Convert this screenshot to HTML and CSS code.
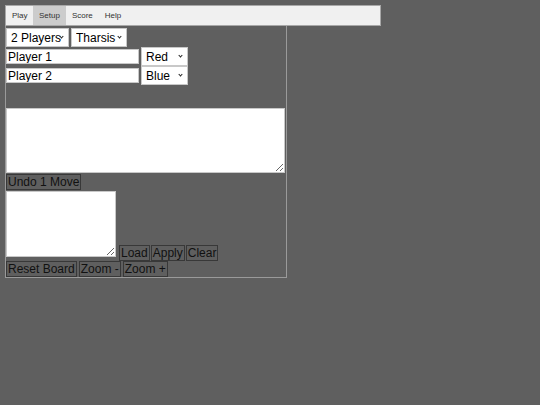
FILE: index.html
```html
<!DOCTYPE html>
<html>
<head>
<meta charset="utf-8">
<link rel="stylesheet" href="styles.css">
</head>
<body>
<div class="nav">
  <div class="tab">Play</div>
  <div class="tab active">Setup</div>
  <div class="tab">Score</div>
  <div class="tab">Help</div>
</div>
<div class="panel">
  <div class="row first">
    <span class="selwrap"><select class="sel sel-players"><option>2 Players</option></select></span>
    <span class="selwrap"><select class="sel sel-map"><option>Tharsis</option></select></span>
  </div>
  <div class="row">
    <input class="name" type="text" value="Player 1">
    <span class="selwrap"><select class="sel sel-color"><option>Red</option></select></span>
  </div>
  <div class="row">
    <input class="name" type="text" value="Player 2">
    <span class="selwrap"><select class="sel sel-color"><option>Blue</option></select></span>
  </div>
  <textarea class="log"></textarea>
  <div class="row-btn"><button class="btn">Undo 1 Move</button></div>
  <div class="row-load">
    <textarea class="state"></textarea>
    <div class="btn-group tight">
      <button class="btn">Load</button>
      <button class="btn">Apply</button>
      <button class="btn">Clear</button>
    </div>
  </div>
  <div class="btn-group wide">
    <button class="btn">Reset Board</button>
    <button class="btn">Zoom -</button>
    <button class="btn">Zoom +</button>
  </div>
</div>
</body>
</html>
```

FILE: styles.css
```css
html, body {
  background: #5f5f5f;
}
body {
  margin: 5px;
  font-family: "Liberation Sans", Arial, sans-serif;
}
.nav {
  width: 376px;
  height: 21px;
  box-sizing: border-box;
  background: #f0f0f0;
  border: 1px solid #a8a8a8;
  display: flex;
}
.tab {
  font-size: 8px;
  line-height: 19px;
  color: #333;
  padding: 0 6px;
}
.tab:first-child {
  padding-left: 6px;
  width: 15px;
}
.active {
  background: #cccccc;
}
.panel {
  width: 282px;
  height: 252px;
  box-sizing: border-box;
  border: 1px solid #9a9a9a;
  border-top: none;
  padding-top: 2px;
}
.row {
  display: flex;
  align-items: center;
  gap: 2px;
  height: 19px;
}
.selwrap {
  position: relative;
  display: block;
  height: 19px;
}
.selwrap::after {
  content: "";
  position: absolute;
  right: 6px;
  top: 7px;
  width: 2px;
  height: 2px;
  border-right: 1px solid #222;
  border-bottom: 1px solid #222;
  transform: rotate(45deg);
  pointer-events: none;
}
.sel {
  display: block;
  -webkit-appearance: none;
  appearance: none;
  height: 19px;
  box-sizing: border-box;
  font-family: "Liberation Sans", Arial, sans-serif;
  font-size: 12px;
  color: #000;
  background: #fff;
  border: 1px solid #c8c8c8;
  border-radius: 0;
  padding: 0 0 0 4px;
  margin: 0;
  outline: none;
}
.sel-players { width: 63px; }
.sel-map { width: 56px; }
.sel-color { width: 47px; }
.name {
  width: 133px;
  height: 15px;
  box-sizing: border-box;
  font-family: "Liberation Sans", Arial, sans-serif;
  font-size: 12px;
  border: 1px solid #c8c8c8;
  background: #fff;
  padding: 0 1px;
  margin: 0;
  color: #000;
}
.log {
  display: block;
  width: 279px;
  height: 65px;
  box-sizing: border-box;
  margin: 23px 0 0 0;
  border: 1px solid #c8c8c8;
  background: #fff;
  padding: 0;
}
.row-btn {
  margin-top: 1px;
  display: flex;
}
.btn {
  font-family: "Liberation Sans", Arial, sans-serif;
  font-size: 12px;
  line-height: 14px;
  height: 16px;
  box-sizing: border-box;
  padding: 0 1px;
  margin: 0;
  background: #5f5f5f;
  color: #111;
  border: 1px solid #383838;
  border-radius: 0;
}
.row-load {
  display: flex;
  align-items: flex-end;
  gap: 3px;
  margin-top: 1px;
}
.state {
  display: block;
  width: 110px;
  height: 66px;
  box-sizing: border-box;
  margin: 0 0 4px 0;
  border: 1px solid #c8c8c8;
  background: #fff;
  padding: 0;
}
.btn-group {
  display: flex;
}
.tight { gap: 1px; }
.wide { gap: 2px; margin-top: 0; }
```
